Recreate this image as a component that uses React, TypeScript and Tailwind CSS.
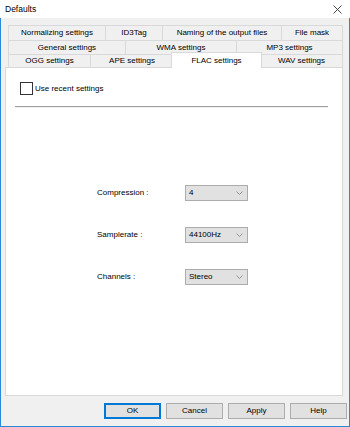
import React from "react";

function Tab({ label, w, last }: { label: string; w: number; last?: boolean }) {
  return (
    <div
      className={
        "flex items-center justify-center border-t border-l border-[#d9d9d9] bg-[#f0f0f0] whitespace-nowrap shrink-0 h-full" +
        (last ? " border-r" : "")
      }
      style={{ width: w }}
    >
      {label}
    </div>
  );
}

function Chevron() {
  return (
    <svg width="7" height="4" viewBox="0 0 7 4" className="shrink-0">
      <path d="M0.5 0.5 L3.5 3.5 L6.5 0.5" fill="none" stroke="#8a8a8a" strokeWidth="0.9" />
    </svg>
  );
}

function Select({ value }: { value: string }) {
  return (
    <div className="w-[63px] h-[16px] bg-[#e1e1e1] border border-[#acacac] flex items-center justify-between pl-[3px] pr-[4px]">
      <span className="text-[8px] text-black">{value}</span>
      <Chevron />
    </div>
  );
}

function Row({ label, value }: { label: string; value: string }) {
  return (
    <div className="flex items-center h-[16px]">
      <div className="w-[88px]">{label}</div>
      <Select value={value} />
    </div>
  );
}

function Btn({ label, def }: { label: string; def?: boolean }) {
  return (
    <div
      className={
        "w-[57px] h-[16px] bg-[#e1e1e1] flex items-center justify-center " +
        (def ? "border-2 border-[#0078d7]" : "border border-[#adadad]")
      }
    >
      {label}
    </div>
  );
}

export default function App() {
  return (
    <div className="w-[350px] h-[427px] bg-[#f0f0f0] flex flex-col font-['Liberation_Sans',Arial,sans-serif] text-[8px] text-black leading-none overflow-hidden">
      <div className="h-[18px] bg-white flex items-center justify-between pl-[5px] pr-[8px] shrink-0">
        <span className="text-[8.5px]">Defaults</span>
        <svg width="9" height="9" viewBox="0 0 9 9">
          <path d="M0.5 0.5 L8.5 8.5 M8.5 0.5 L0.5 8.5" stroke="#333" strokeWidth="0.9" />
        </svg>
      </div>
      <div className="flex-1 border-x border-b border-[#2b87d8] flex flex-col">
        <div className="pt-[7px] pl-[7px] flex flex-col shrink-0">
          <div className="flex h-[15px]">
            <Tab label="Normalizing settings" w={97} />
            <Tab label="ID3Tag" w={57} />
            <Tab label="Naming of the output files" w={119} />
            <Tab label="File mask" w={62} last />
          </div>
          <div className="flex h-[14px]">
            <Tab label="General settings" w={117} />
            <Tab label="WMA settings" w={111} />
            <Tab label="MP3 settings" w={107} last />
          </div>
          <div className="flex h-[13px] items-start">
            <Tab label="OGG settings" w={82} />
            <Tab label="APE settings" w={83} />
            <div className="relative z-10 -ml-[2px] -mr-[2px] -mt-[2px] w-[91px] h-[16px] shrink-0 bg-white border-x border-t border-[#d9d9d9] flex items-start justify-center pt-[4px] whitespace-nowrap">
              FLAC settings
            </div>
            <Tab label="WAV settings" w={83} last />
          </div>
        </div>
        <div className="ml-[4px] w-[338px] h-[329px] bg-white border border-[#d9d9d9] shrink-0 flex flex-col">
          <div className="pt-[14px] pl-[14px] flex items-center h-[27px]">
            <div className="w-[13px] h-[13px] border border-[#333] bg-white mr-[2px]"></div>
            <span>Use recent settings</span>
          </div>
          <div className="mt-[11px] ml-[9px] w-[313px] h-[2px] border-t border-[#a0a0a0] border-b border-b-[#f0f0f0]"></div>
          <div className="mt-[77px] pl-[91px] flex flex-col gap-[26px]">
            <Row label="Compression :" value="4" />
            <Row label="Samplerate :" value="44100Hz" />
            <Row label="Channels :" value="Stereo" />
          </div>
        </div>
        <div className="mt-[7px] flex pl-[103px] gap-[5px]">
          <Btn label="OK" def />
          <Btn label="Cancel" />
          <Btn label="Apply" />
          <Btn label="Help" />
        </div>
      </div>
    </div>
  );
}
